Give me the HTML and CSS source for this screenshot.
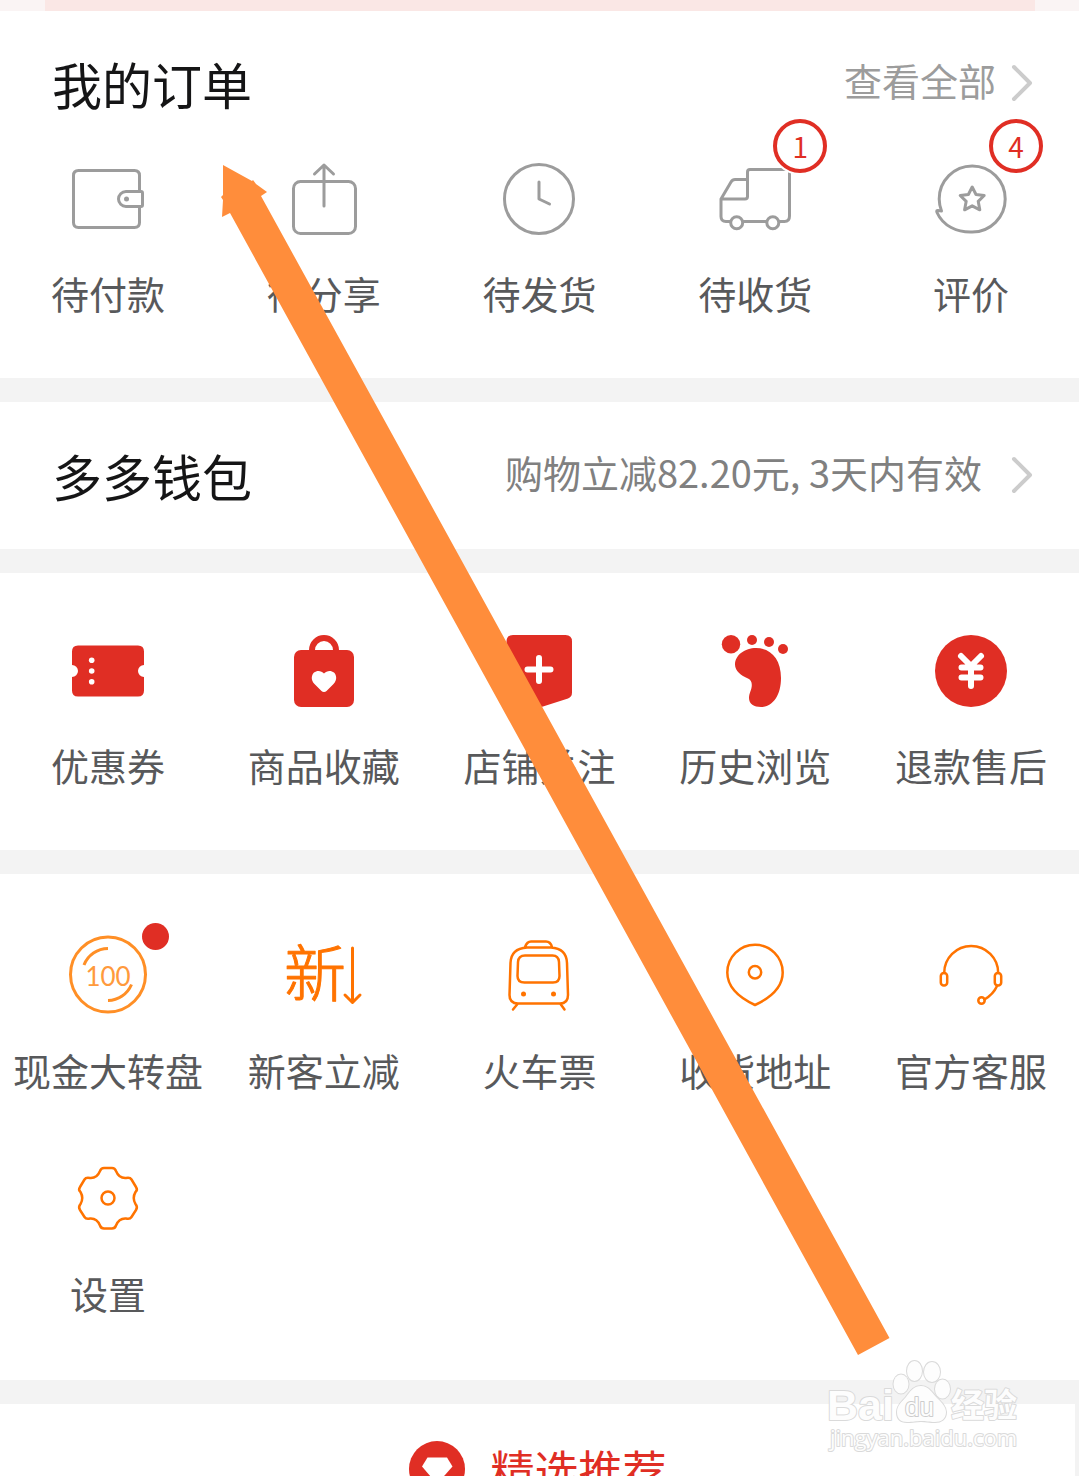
FILE: index.html
```html
<!DOCTYPE html>
<html lang="zh-CN">
<head>
    <meta charset="UTF-8">
    <meta name="viewport" content="width=device-width, initial-scale=1.0">
    <title>个人中心</title>
    <link rel="stylesheet" href="styles.css">
</head>
<body>
    <main class="page">
        <div class="banner"><div class="banner-inner"></div></div>

        <section class="card orders">
            <div class="card-header">
                <h2>我的订单</h2>
                <a class="more" href="#orders"><span>查看全部</span>
                    <svg class="chevron" viewBox="0 0 20 36"><path d="M2 2L18 18L2 34"/></svg>
                </a>
            </div>
            <nav class="grid">
                <a class="item" href="#pay">
                    <span class="icon gray">
                        <svg viewBox="0 0 72 72">
                            <path d="M67.500 27V12.500q0-5-5-5H6.500q-5 0-5 5v47q0 5 5 5h56q5 0 5-5V45"/>
                            <path d="M54 28.500h15q1.500 0 1.500 1.500v12q0 1.500-1.500 1.500H54a7.500 7.500 0 0 1 0-15z"/>
                            <circle class="fill" cx="54.500" cy="36" r="2.500"/>
                        </svg>
                    </span>
                    <span class="label">待付款</span>
                </a>
                <a class="item" href="#share">
                    <span class="icon gray">
                        <svg viewBox="0 0 72 72">
                            <rect x="5.500" y="18.500" width="62" height="52" rx="7"/>
                            <path d="M36 43V2M26.500 11L36 2L45.500 11"/>
                        </svg>
                    </span>
                    <span class="label">待分享</span>
                </a>
                <a class="item" href="#ship">
                    <span class="icon gray">
                        <svg viewBox="0 0 72 72">
                            <circle cx="36" cy="36" r="34.500"/>
                            <path d="M36 19V36L46.500 41"/>
                        </svg>
                    </span>
                    <span class="label">待发货</span>
                </a>
                <a class="item" href="#receive">
                    <span class="icon gray">
                        <svg viewBox="0 0 72 72">
                            <path d="M11 58.500H7q-5 0-5-5V36L12 19q1.500-2.500 4-2.500H28.500M2 36H26q2.500 0 2.500-2.500V9q0-2.500 2.500-2.500H68q2.500 0 2.500 2.500V53q0 5.500-5 5.500H60.500M24.500 58.500H47.500"/>
                            <circle cx="17.700" cy="59.700" r="6"/>
                            <circle cx="53.800" cy="59.700" r="6"/>
                        </svg>
                        <span class="badge">1</span>
                    </span>
                    <span class="label">待收货</span>
                </a>
                <a class="item" href="#review">
                    <span class="icon gray">
                        <svg viewBox="0 0 72 72">
                            <path d="M6.500 48C5 44 4.200 40 4.200 36A33 33 0 1 1 37.200 69C22 69.500 8 63 2 49.500Q1 47 3.500 47.500Z"/>
                            <path d="M37.200 24L41 31.500L49.200 32.500L43.200 38.300L44.800 46.800L37.200 42.800L29.600 46.800L31.200 38.300L25.200 32.500L33.400 31.500Z"/>
                        </svg>
                        <span class="badge">4</span>
                    </span>
                    <span class="label">评价</span>
                </a>
            </nav>
        </section>

        <section class="card wallet">
            <div class="card-header">
                <h2>多多钱包</h2>
                <a class="more wallet-note" href="#wallet"><span>购物立减82.20元, 3天内有效</span>
                    <svg class="chevron" viewBox="0 0 20 36"><path d="M2 2L18 18L2 34"/></svg>
                </a>
            </div>
        </section>

        <section class="card tools">
            <nav class="grid">
                <a class="item" href="#coupon">
                    <span class="icon red">
                        <svg viewBox="0 0 72 72">
                            <path d="M6 10.500H66q6 0 6 6V30a6 6 0 0 0 0 12V55.500q0 6-6 6H6q-6 0-6-6V42a6 6 0 0 0 0-12V16.500q0-6 6-6z"/>
                            <g class="white"><circle cx="19.700" cy="25.300" r="2.800"/><circle cx="19.700" cy="36" r="2.800"/><circle cx="19.700" cy="46.700" r="2.800"/></g>
                        </svg>
                    </span>
                    <span class="label">优惠券</span>
                </a>
                <a class="item" href="#goods">
                    <span class="icon red">
                        <svg viewBox="0 0 72 72">
                            <path d="M21 18V15a15 15 0 0 1 30 0V18H45V15a9 9 0 0 0-18 0V18z"/>
                            <rect x="6" y="15" width="60" height="57" rx="7"/>
                            <path class="white" d="M36 57Q34.500 57 33.500 56L26.500 49C22.500 45 23.500 40 26 37.500C29 35 33.500 35.500 36 38.500C38.500 35.500 43 35 46 37.500C48.500 40 49.500 45 45.500 49L38.500 56Q37.500 57 36 57Z"/>
                        </svg>
                    </span>
                    <span class="label">商品收藏</span>
                </a>
                <a class="item" href="#shops">
                    <span class="icon red">
                        <svg viewBox="0 0 72 72">
                            <path d="M10 0H62.500q6.500 0 6.500 6.500V57.500q0 4.500-4 6L40 71.500q-4 1.500-8 0L7.500 63.500q-4-1.500-4-6V6.500Q3.500 0 10 0z"/>
                            <path class="white-line" d="M24.500 34.500H47.500M36 23V46"/>
                        </svg>
                    </span>
                    <span class="label">店铺关注</span>
                </a>
                <a class="item" href="#history">
                    <span class="icon red">
                        <svg viewBox="0 0 72 72">
                            <circle cx="12" cy="9.200" r="9.200"/>
                            <circle cx="33" cy="5" r="5"/>
                            <circle cx="50" cy="7" r="5"/>
                            <circle cx="64" cy="14" r="5"/>
                            <path d="M16 29.500C16 20 26 13 37 13C52 13 62 24 62 43C62 60 54 72 42 72C35 72 30 69 30 63C30 58 32.800 55 32.800 50C32.800 47 31.500 44.500 29 43.500C22 40.500 16 36 16 29.500Z"/>
                        </svg>
                    </span>
                    <span class="label">历史浏览</span>
                </a>
                <a class="item" href="#refund">
                    <span class="icon red">
                        <svg viewBox="0 0 72 72">
                            <circle cx="36" cy="36" r="36"/>
                            <path class="white-line" d="M26 21L36 31L46 21M26.500 32.500H45.500M26.500 42.500H45.500M36 31V51"/>
                        </svg>
                    </span>
                    <span class="label">退款售后</span>
                </a>
            </nav>
        </section>

        <section class="card services">
            <nav class="grid">
                <a class="item" href="#wheel">
                    <span class="icon orange">
                        <svg viewBox="0 0 72 72">
                            <g class="soft">
                                <circle cx="36" cy="36.500" r="37.500"/>
                                <path d="M12 27A26 26 0 0 1 36 10.500M59.500 46.500A26 26 0 0 1 36 62.500"/>
                            </g>
                            <text class="coin" x="36" y="48">100</text>
                        </svg>
                        <span class="dot"></span>
                    </span>
                    <span class="label">现金大转盘</span>
                </a>
                <a class="item" href="#newcomer">
                    <span class="icon orange">
                        <svg viewBox="0 0 72 72">
                            <text class="new" x="-4" y="59">新</text>
                            <path d="M64.500 10V64M57 57L64.500 64.500L72 57"/>
                        </svg>
                    </span>
                    <span class="label">新客立减</span>
                </a>
                <a class="item" href="#train">
                    <span class="icon orange thin">
                        <svg viewBox="0 0 72 72">
                            <path d="M24 9.500H48Q63.500 10.500 64 25L65 57Q65 65.500 57 65.500H15Q6.500 65.500 6.500 57L7.500 25Q8 10.500 24 9.500ZM22 9Q24 3.500 28 3.500H43Q47.500 3.500 49 9M14.500 66L10 71.500M57.500 66L61.500 71.500"/>
                            <path d="M22 17.500H49.500Q55.500 17.500 56 24L56.500 38Q56.500 44.500 50 44.500H21.500Q14.500 44.500 14.500 38L15 24Q15.500 17.500 22 17.500Z"/>
                            <circle class="fill" cx="20.500" cy="56" r="2.500"/>
                            <circle class="fill" cx="50.500" cy="56" r="2.500"/>
                        </svg>
                    </span>
                    <span class="label">火车票</span>
                </a>
                <a class="item" href="#address">
                    <span class="icon orange thin">
                        <svg viewBox="0 0 72 72">
                            <path d="M36 67C21 60 8.300 50 8.300 34.500A27.700 27.700 0 0 1 63.700 34.500C63.700 50 51 60 36 67Z"/>
                            <circle cx="36" cy="34.300" r="6.200"/>
                        </svg>
                    </span>
                    <span class="label">收货地址</span>
                </a>
                <a class="item" href="#support">
                    <span class="icon orange thin">
                        <svg viewBox="0 0 72 72">
                            <path d="M9.200 35A27 27 0 0 1 63.200 35M62 48Q58.500 56 49.500 61.500"/>
                            <rect x="5.800" y="35" width="6.400" height="12.500" rx="3"/>
                            <rect x="59.800" y="35" width="6.400" height="12.500" rx="3"/>
                            <circle cx="46.500" cy="62.500" r="3.200"/>
                        </svg>
                    </span>
                    <span class="label">官方客服</span>
                </a>
                <a class="item" href="#settings">
                    <span class="icon orange thin">
                        <svg viewBox="0 0 72 72">
                            <path d="M32 7H40Q43 7 44 10Q47 17.500 54 17Q58 16 59.500 18.500L64 26Q66 29 63.500 31Q60 37 63.500 43Q66 46 64 49L59.500 56Q58 58.500 54 57.500Q47 57 44 64.500Q43 67.500 40 67.500H32Q29 67.500 28 64.500Q25 57 18 57.500Q14 58.500 12.500 56L8 49Q6 46 8.500 43Q12 37 8.500 31Q6 29 8 26L12.500 18.500Q14 16 18 17Q25 17.500 28 10Q29 7 32 7Z"/>
                            <circle cx="36" cy="37" r="6.500"/>
                        </svg>
                    </span>
                    <span class="label">设置</span>
                </a>
            </nav>
        </section>

        <section class="card recommend">
            <svg class="gem" viewBox="0 0 56 56">
                <circle cx="28" cy="28" r="28"/>
                <path class="white" d="M18.500 16.500H38L43.500 25.500L28 43L13 25.500Z"/>
            </svg>
            <h2>精选推荐</h2>
        </section>

        <svg class="pointer" viewBox="0 0 1079 1476">
            <path d="M223 165L252 181L253 180L256 184L267 192L261 196L889.500 1338L858 1355L230 213L222 217L223 200L221 197L223 195Z"/>
        </svg>

        <svg class="watermark" viewBox="0 0 210 100">
            <g class="paw">
                <ellipse cx="81" cy="29" rx="7.500" ry="9.500"/>
                <ellipse cx="94.500" cy="16" rx="7.500" ry="10"/>
                <ellipse cx="112" cy="17" rx="8" ry="10"/>
                <ellipse cx="122.500" cy="34" rx="7.500" ry="9.500"/>
                <path d="M101 31C109 31 112 38 117 43C122 48 126 52 126 57C126 64 121 67 115 67C109 67 106 66 101 66C96 66 93 67 87 67C81 67 77 64 77 57C77 50 82 47 86 42C90 37 93 31 101 31Z"/>
            </g>
            <text class="brand" x="7" y="65">Bai</text>
            <text class="brand-du" x="85" y="61">du</text>
            <text class="brand-cn" x="131" y="62">经验</text>
            <text class="site" x="10" y="91">jingyan.baidu.com</text>
        </svg>
    </main>
</body>
</html>
```
FILE: styles.css
```css
body {
    margin: 0;
    background-color: #f3f3f3;
    font-family: "Noto Sans CJK SC", sans-serif;
    color: #58595b;
}
a {
    color: inherit;
    text-decoration: none;
}
h2 {
    margin: 0;
    font-size: 50px;
    font-weight: 400;
    line-height: 60px;
    color: #151516;
}
svg {
    display: block;
    overflow: visible;
}
.page {
    position: relative;
    height: 100vh;
    overflow: hidden;
}
.banner {
    height: 11px;
    padding: 0 44px 0 45px;
    background-color: #faf4f4;
}
.banner-inner {
    height: 100%;
    background-color: #fae7e5;
}
.card {
    background-color: #fff;
    margin-bottom: 24px;
}
.card-header {
    display: flex;
    align-items: center;
    justify-content: space-between;
    height: 144px;
    padding: 0 47px 0 52px;
}
.more {
    display: flex;
    align-items: center;
    gap: 16px;
    font-size: 38px;
    line-height: 52px;
    color: #9c9c9c;
}
.more span {
    padding-bottom: 6px;
}
.wallet {
    padding: 1px 0 2px;
}
.wallet-note {
    gap: 30px;
    color: #808080;
}
.chevron {
    width: 20px;
    height: 36px;
    fill: none;
    stroke: #ccc;
    stroke-width: 4;
    stroke-linecap: round;
    stroke-linejoin: round;
}
.grid {
    display: grid;
    grid-template-columns: repeat(5, 1fr);
    row-gap: 63px;
}
.item {
    display: flex;
    flex-direction: column;
    align-items: center;
    gap: 30px;
}
.label {
    font-size: 38px;
    line-height: 56px;
    white-space: nowrap;
}
.orders {
    padding-bottom: 57px;
}
.orders .grid {
    padding-top: 8px;
}
.tools {
    padding: 62px 0 57px;
}
.services {
    padding: 64px 0 59px;
}
.services .item {
    gap: 32px;
}

/* icons */
.icon {
    position: relative;
    width: 72px;
    height: 72px;
    fill: none;
    stroke-width: 3;
    stroke-linecap: round;
    stroke-linejoin: round;
}
.gray {
    stroke: #9c9c9c;
}
.gray .fill {
    fill: #9c9c9c;
    stroke: none;
}
.red {
    fill: #e02e24;
}
.orange {
    stroke: #ff7300;
}
.orange .fill {
    fill: #ff7300;
    stroke: none;
}
.orange .soft {
    stroke: #ff8f26;
    stroke-linecap: butt;
}
.thin {
    stroke-width: 2.5;
}
.white {
    fill: #fff;
}
.white-line {
    fill: none;
    stroke: #fff;
    stroke-width: 6;
}
.coin {
    fill: #ff9a3c;
    stroke: none;
    font-family: Lato, sans-serif;
    font-size: 26px;
    text-anchor: middle;
}
.new {
    fill: #ff7300;
    stroke: #ff7300;
    stroke-width: 1;
    font-size: 62px;
    font-weight: 300;
}
.badge {
    position: absolute;
    left: 54px;
    top: -44px;
    box-sizing: border-box;
    width: 54px;
    height: 54px;
    border: 4px solid #e02e24;
    border-radius: 50%;
    background-color: #fff;
    box-shadow: 0 0 0 2px #fff;
    color: #e02e24;
    font-size: 28px;
    line-height: 46px;
    text-align: center;
}
.dot {
    position: absolute;
    left: 70px;
    top: -15px;
    width: 27px;
    height: 27px;
    border-radius: 50%;
    background-color: #e02e24;
}

.recommend {
    display: flex;
    justify-content: center;
    align-items: center;
    gap: 26px;
    margin: 0 4px 0 0;
    padding: 37px 0;
}
.recommend h2 {
    font-size: 44px;
    line-height: 56px;
    color: #e02e24;
}
.gem {
    width: 56px;
    height: 56px;
    fill: #e02e24;
}

/* overlays */
.pointer {
    position: absolute;
    left: 0;
    top: 0;
    width: 100%;
    fill: #ff8d3b;
    pointer-events: none;
}
.watermark {
    position: absolute;
    right: 49px;
    bottom: 21px;
    width: 210px;
    height: 100px;
    fill: #fdfdfd;
    stroke: #dadada;
    stroke-width: 2;
    stroke-linejoin: round;
    paint-order: stroke;
    font-family: "Liberation Sans", "Noto Sans CJK SC", sans-serif;
    pointer-events: none;
}
.brand {
    font-size: 43px;
    font-weight: 700;
}
.brand-du {
    font-size: 26px;
    stroke: #ccc;
}
.brand-cn {
    font-size: 33px;
    font-weight: 700;
}
.site {
    font-family: "Open Sans", sans-serif;
    font-size: 22px;
}
```
